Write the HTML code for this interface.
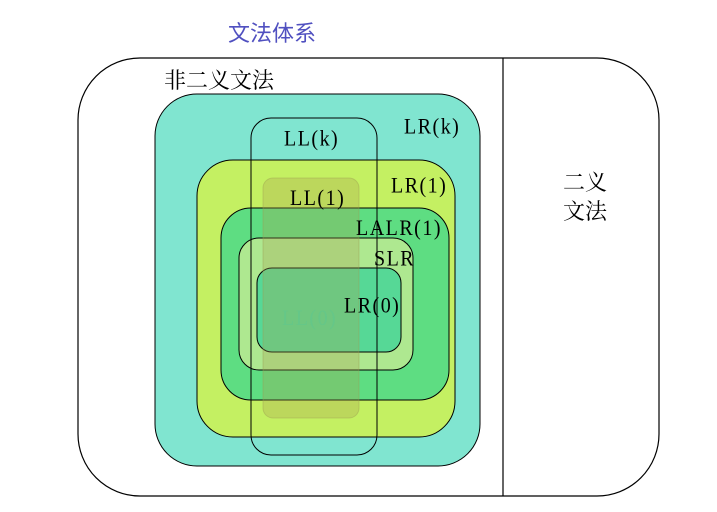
<!DOCTYPE html>
<html><head><meta charset="utf-8"><style>
html,body{margin:0;padding:0;background:#fff;width:717px;height:512px;overflow:hidden}
svg text{font-family:"Liberation Serif","Noto Serif CJK SC",serif}
.l{font-size:20px;letter-spacing:1.5px;transform-box:fill-box}
</style></head><body>
<svg width="717" height="512" xmlns="http://www.w3.org/2000/svg">
<text x="228" y="41" font-size="22" fill="#5050C0" style="font-family:'Liberation Sans','Noto Sans CJK SC',sans-serif">文法体系</text>
<rect x="78" y="58" width="581" height="438" rx="62" fill="#fff" stroke="#000" stroke-width="1.2"/>
<line x1="503" y1="58" x2="503" y2="496" stroke="#000" stroke-width="1.2"/>
<text x="164" y="88" font-size="22" fill="#000">非二义文法</text>
<text x="563" y="190" font-size="22" fill="#000">二义</text>
<text x="563" y="219" font-size="22" fill="#000">文法</text>
<rect x="155" y="94" width="325" height="372" rx="42" fill="#80E5D0" stroke="#000"/>
<rect x="197" y="160" width="258" height="277" rx="36" fill="#C4F062" stroke="#000"/>
<rect x="221" y="208" width="228" height="192" rx="30" fill="#5EDD82" stroke="#000"/>
<rect x="239" y="238" width="174" height="132" rx="20" fill="#AEE890" stroke="#000"/>
<rect x="257" y="268" width="144" height="84" rx="15" fill="#56D896" stroke="#000"/>
<rect x="263" y="178" width="96" height="240" rx="10" fill="#A8A050" fill-opacity="0.3" stroke="#9a9a50" stroke-opacity="0.4"/>
<rect x="251" y="118" width="126" height="337" rx="20" fill="none" stroke="#000"/>
<g transform="scale(1,1.12)">
<text class="l" x="284" y="130">LL(k)</text>
<text class="l" x="404" y="119">LR(k)</text>
<text class="l" x="391" y="172">LR(1)</text>
<text class="l" x="290" y="183">LL(1)</text>
<text class="l" x="356" y="210">LALR(1)</text>
<text class="l" x="374" y="237">SLR</text>
<text class="l" x="344" y="279">LR(0)</text>
<text class="l" x="282" y="290" fill="#5cc890" fill-opacity="0.5">LL(0)</text>
</g>
</svg>
</body></html>
